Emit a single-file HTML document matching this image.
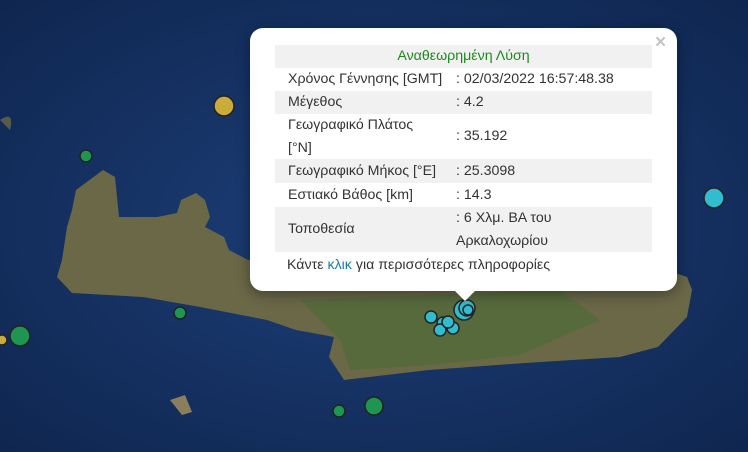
<!DOCTYPE html>
<html><head><meta charset="utf-8"><style>
body{margin:0;width:748px;height:452px;overflow:hidden;position:relative;font-family:"Liberation Sans",Arial,sans-serif;}
svg.map{position:absolute;left:0;top:0}
.pop{position:absolute;left:250px;top:28px;width:427px;height:263px;background:#fff;border-radius:13px;box-shadow:0 3px 14px rgba(0,0,0,.4)}
.tip{position:absolute;left:452px;top:288px;width:0;height:0;border-left:13px solid transparent;border-right:13px solid transparent;border-top:13px solid #fff}
.x{position:absolute;left:655px;top:32px;color:#c3c3c3;font-size:19px;font-weight:bold}
table{position:absolute;left:275px;top:45px;width:377px;border-collapse:collapse;font-size:14.2px;color:#333}
td{padding:0 0 0 13px;line-height:22.5px;vertical-align:middle}
tr.g{background:#f1f1f1}
td.v{padding-left:0;width:196px}
.foot{position:absolute;left:287px;top:257px;font-size:14.2px;color:#333}
</style></head><body>
<svg class="map" width="748" height="452" viewBox="0 0 748 452">
<defs><radialGradient id="sea" cx="50%" cy="50%" r="70%"><stop offset="0" stop-color="#1d3f78"/><stop offset="1" stop-color="#0f2650"/></radialGradient></defs>
<rect width="748" height="452" fill="url(#sea)"/>
<path d="M0 120 Q15 110 10 130Z" fill="#5a5a48"/>
<path d="M57 277 L62 260 67 227 72 210 76 190 103 170 115 177 119 217 157 217 177 213 181 200 196 193 205 200 210 217 205 227 224 237 229 250 248 260 330 260 560 270 660 268 687 277 692 290 687 317 658 347 620 357 525 363 429 370 344 380 329 357 334 337 296 330 267 320 200 307 143 297 72 293Z" fill="#6a6847"/>
<path d="M300 300 L560 290 600 320 520 355 430 365 350 370 340 340Z" fill="#526a3a" opacity=".8"/>
<path d="M170 400 L185 395 192 412 182 415Z" fill="#8a7e5c"/>
<g stroke="#222" stroke-width="1.5">
<circle cx="224" cy="106" r="10" fill="#c9ac3a"/>
<circle cx="86" cy="156" r="6" fill="#1f9552"/>
<circle cx="714" cy="198" r="10" fill="#32bccf"/>
<circle cx="20" cy="336" r="10" fill="#1f9552"/>
<circle cx="2" cy="340" r="5" fill="#c9ac3a"/>
<circle cx="180" cy="313" r="6" fill="#1f9552"/>
<circle cx="339" cy="411" r="6" fill="#1f9552"/>
<circle cx="374" cy="406" r="9" fill="#1f9552"/>
<g fill="#32bccf"><circle cx="431" cy="317" r="6"/><circle cx="443" cy="323" r="6"/><circle cx="440" cy="330" r="6"/><circle cx="453" cy="328" r="6"/><circle cx="448" cy="322" r="6"/><circle cx="464" cy="310" r="10"/><circle cx="467" cy="308" r="8"/><circle cx="468" cy="310" r="5"/></g>
</g>
</svg>
<div class="pop"></div><div class="tip"></div><div class="x">×</div>
<table>
<tr class="g"><td colspan="2" style="text-align:center;color:#1b8a1b;padding:0;line-height:23px">Αναθεωρημένη Λύση</td></tr>
<tr><td style="line-height:23px">Χρόνος Γέννησης [GMT]</td><td class="v">: 02/03/2022 16:57:48.38</td></tr>
<tr class="g"><td style="line-height:23px">Μέγεθος</td><td class="v">: 4.2</td></tr>
<tr><td>Γεωγραφικό Πλάτος<br>[°N]</td><td class="v">: 35.192</td></tr>
<tr class="g"><td style="line-height:24px">Γεωγραφικό Μήκος [°E]</td><td class="v">: 25.3098</td></tr>
<tr><td style="line-height:24px">Εστιακό Βάθος [km]</td><td class="v">: 14.3</td></tr>
<tr class="g"><td>Τοποθεσία</td><td class="v">: 6 Χλμ. ΒΑ του<br>Αρκαλοχωρίου</td></tr>
</table>
<div class="foot">Κάντε <span style="color:#1a7bb0">κλικ</span> για περισσότερες πληροφορίες</div>
</body></html>
